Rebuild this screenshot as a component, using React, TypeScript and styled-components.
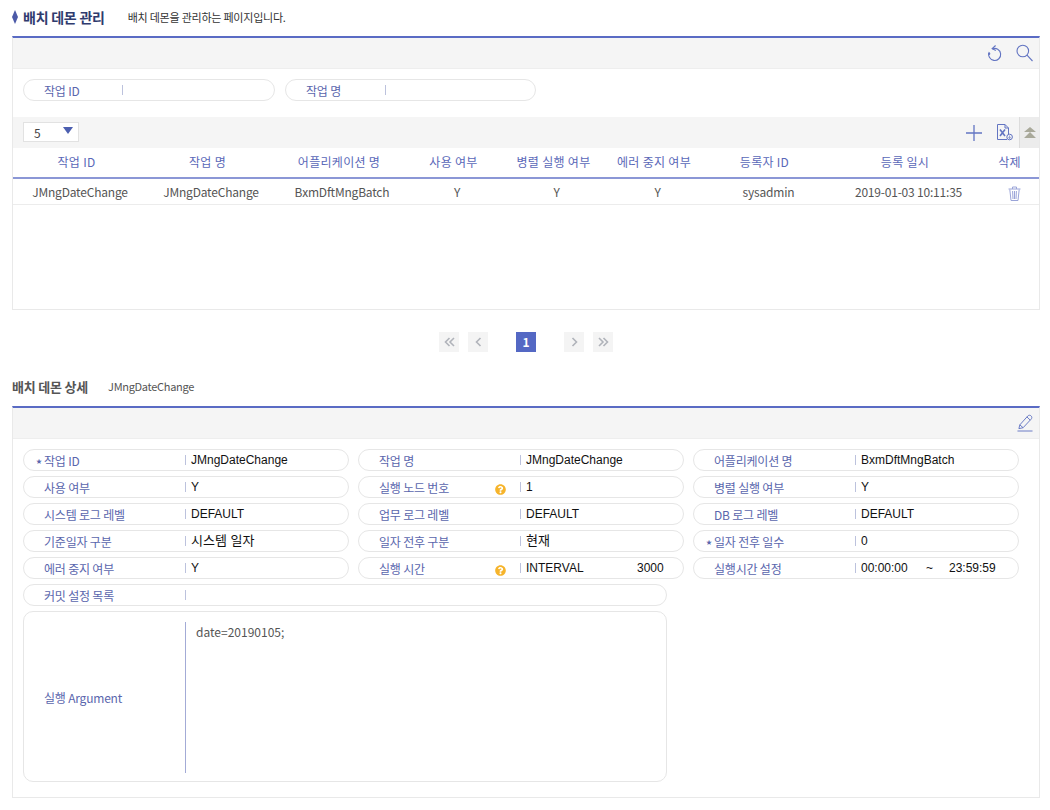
import React, { FC, ReactNode } from 'react'
import styled, { createGlobalStyle } from 'styled-components'
import { FaQuestionCircle } from 'react-icons/fa'

const GlobalStyle = createGlobalStyle`
  html, body {
    margin: 0;
    padding: 0;
    background: #fff;
    font-family: "Noto Sans CJK KR", "Noto Sans", sans-serif;
    font-size: 12px;
    color: #555;
  }
`

const Page = styled.div`
  width: 1028px;
  margin-left: 12px;
`

const TitleRow = styled.div`
  height: 36px;
  display: flex;
  align-items: center;
  padding-bottom: 2px;
  box-sizing: border-box;
`

const Diamond = styled.span`
  width: 6px;
  height: 14px;
  background: #4c5aa8;
  clip-path: polygon(50% 0, 100% 50%, 50% 100%, 0 50%);
  margin-right: 5px;
`

const PageTitle = styled.h1`
  margin: 0 23px 0 0;
  font-size: 14px;
  line-height: 20px;
  font-weight: 700;
  color: #2f3b6e;
  letter-spacing: -0.25px;
`

const PageDesc = styled.span`
  font-size: 11px;
  color: #333;
  letter-spacing: -0.22px;
`

const Panel = styled.section<{ $height: number }>`
  height: ${p => p.$height}px;
  box-sizing: border-box;
  border: 1px solid #e9e9e9;
  border-top: 2px solid #5a6bc4;
`

const Toolbar = styled.div`
  height: 30px;
  background: #f5f5f5;
  border-bottom: 1px solid #eeeeee;
  display: flex;
  align-items: center;
  justify-content: flex-end;
  gap: 13px;
  padding-right: 6px;
`

const IconButton = styled.button`
  padding: 0;
  border: 0;
  background: none;
  display: flex;
  line-height: 0;
`

const SearchArea = styled.div`
  height: 48px;
  box-sizing: border-box;
  display: flex;
  align-items: center;
  gap: 10px;
  padding: 0 0 6px 10px;
`

const Pill = styled.div<{ $width: number }>`
  width: ${p => p.$width}px;
  height: 22px;
  box-sizing: border-box;
  border: 1px solid #e6e6e6;
  border-radius: 11px;
  display: flex;
  align-items: center;
  background: #fff;
`

const PillLabel = styled.label<{ $width: number }>`
  width: ${p => p.$width}px;
  flex-shrink: 0;
  box-sizing: border-box;
  padding: 0 12px 0 20px;
  display: flex;
  align-items: center;
  justify-content: space-between;
  color: #5a66ad;
  font-size: 12px;
  letter-spacing: -0.2px;
`

const LabelText = styled.span`
  display: flex;
  align-items: center;
`

const Star = styled.span`
  width: 8px;
  margin-left: -8px;
  font-size: 6px;
  color: #5a66ad;
`

const Divider = styled.span`
  width: 1px;
  height: 10px;
  background: #bcc2dd;
  flex-shrink: 0;
`

const Value = styled.span<{ $hangul?: boolean }>`
  margin: ${p => (p.$hangul ? '-3px 0 0 5px' : '0 0 0 5px')};
  font-family: "Liberation Sans", "Noto Sans CJK KR", sans-serif;
  font-size: ${p => (p.$hangul ? 13 : 12)}px;
  color: #111;
  white-space: pre;
`

const GridBar = styled.div`
  height: 31px;
  box-sizing: border-box;
  background: #f5f5f5;
  display: flex;
  align-items: center;
  padding-left: 10px;
`

const SelectBox = styled.div`
  width: 56px;
  height: 20px;
  margin-bottom: 1px;
  box-sizing: border-box;
  border: 1px solid #e2e2e2;
  background: #fff;
  display: flex;
  align-items: center;
  justify-content: space-between;
  padding: 0 5px 0 10px;
  font-size: 12px;
  color: #444;
`

const SelectArrow = styled.span`
  width: 0;
  height: 0;
  border-left: 5px solid transparent;
  border-right: 5px solid transparent;
  border-top: 7px solid #4c5fb0;
  margin-bottom: 3px;
`

const GridActions = styled.div`
  margin-left: auto;
  display: flex;
  align-items: center;
  gap: 6px;
  height: 100%;
`

const IconGroup = styled.div`
  display: flex;
  align-items: center;
  gap: 15px;
`

const CollapseButton = styled.button`
  width: 20px;
  height: 100%;
  padding: 0;
  border: 0;
  border-left: 1px solid #dcdcdc;
  background: #ececec;
  display: flex;
  align-items: center;
  justify-content: center;
`

const Table = styled.table`
  width: 100%;
  border-collapse: collapse;
  table-layout: fixed;
`

const HeadCell = styled.th<{ $nudge: number }>`
  height: 27px;
  padding: 0 ${p => p.$nudge}px 2px 0;
  font-weight: 400;
  font-size: 12px;
  letter-spacing: 0.3px;
  color: #5a68b8;
  border-bottom: 2px solid #8b97d6;
  text-align: center;
`

const BodyCell = styled.td<{ $offset: number }>`
  height: 25px;
  padding: 0 ${p => Math.max(-p.$offset, 0)}px 0 ${p => Math.max(p.$offset, 0)}px;
  color: #555;
  font-size: 12px;
  letter-spacing: -0.2px;
  text-align: center;
  border-bottom: 1px solid #ececec;
`

const TrashSlot = styled.span`
  display: inline-flex;
  margin-left: 6px;
  vertical-align: middle;
`

const Pagination = styled.nav`
  height: 63px;
  display: flex;
  align-items: center;
  justify-content: center;
`

const PageButton = styled.span<{ $active?: boolean; $gapRight?: number }>`
  width: 20px;
  height: 20px;
  margin-right: ${p => p.$gapRight ?? 0}px;
  background: ${p => (p.$active ? '#5468c4' : '#f4f4f4')};
  color: #fff;
  font-weight: 700;
  font-size: 12px;
  display: flex;
  align-items: center;
  justify-content: center;
`

const SectionTitleRow = styled.div`
  height: 33px;
  display: flex;
  align-items: center;
  padding-bottom: 7px;
  box-sizing: border-box;
`

const SectionTitle = styled.h2`
  margin: 0 20px 0 0;
  font-size: 13px;
  font-weight: 700;
  color: #555;
  letter-spacing: -0.2px;
`

const SectionSub = styled.span`
  font-size: 11px;
  color: #555;
  letter-spacing: -0.3px;
`

const DetailBody = styled.div`
  display: grid;
  grid-template-columns: repeat(3, 326px);
  column-gap: 9px;
  row-gap: 5px;
  padding: 10px 0 0 10px;
`

const WideCell = styled.div`
  grid-column: span 2;
`

const ArgumentBox = styled.div`
  width: 644px;
  height: 171px;
  box-sizing: border-box;
  border: 1px solid #e6e6e6;
  border-radius: 10px;
  display: flex;
  align-items: center;
  padding: 10px 0 8px;
`

const ArgumentRule = styled.span`
  width: 1px;
  height: 100%;
  background: #a3abd6;
  flex-shrink: 0;
`

const ArgumentText = styled.div`
  align-self: flex-start;
  margin-left: 10px;
  color: #555;
  font-size: 12px;
  line-height: 18px;
  margin-top: 1px;
`

const Inline = styled.span<{ $width: number }>`
  display: inline-block;
  width: ${p => p.$width}px;
`

const Help = styled(FaQuestionCircle)`
  color: #f6b42b;
  font-size: 11px;
  margin: 4px 2px 0 0;
`

const stroke = '#6274c2'

const ReloadIcon = () => (
  <svg width="16" height="18" viewBox="0 0 16 18" fill="none" stroke={stroke} strokeWidth="1.1">
    <path d="M5.4 4.9 A6 6 0 1 1 2.2 8" />
    <path d="M8.6 1.5 L5.2 4.7 L8.8 6.4" />
    <circle cx="2.2" cy="9.8" r="0.6" fill={stroke} />
  </svg>
)

const SearchIcon = () => (
  <svg width="17" height="18" viewBox="0 0 17 18" fill="none" stroke={stroke} strokeWidth="1.1">
    <circle cx="6.8" cy="7" r="5.8" />
    <path d="M11 11.2 L16.5 17" />
  </svg>
)

const PlusIcon = () => (
  <svg width="16" height="16" viewBox="0 0 16 16" fill="none" stroke={stroke} strokeWidth="1.3">
    <path d="M8 0 V16 M0 8 H16" />
  </svg>
)

const ExcelIcon = () => (
  <svg width="16" height="17" viewBox="0 0 16 17" fill="none" stroke={stroke} strokeWidth="1">
    <path d="M10 15.5 H0.5 V0.5 H8 L11.5 4 V10 M8 0.5 V4 H11.5" />
    <path d="M3 5.5 L8 12 M8 5.5 L3 12" strokeWidth="1.6" />
    <circle cx="12.6" cy="13" r="2.8" />
    <path d="M12.6 11.5 V14.5 M11.4 13.4 L12.6 14.5 L13.8 13.4" strokeWidth="0.7" />
  </svg>
)

const CollapseIcon = () => (
  <svg width="12" height="11" viewBox="0 0 12 11" fill="#a9a99a">
    <path d="M6 0 L12 5 H0 Z M6 5 L12 11 H0 Z" />
  </svg>
)

const TrashIcon = () => (
  <svg width="13" height="15" viewBox="0 0 13 15" fill="none" stroke="#9aa4d8" strokeWidth="1">
    <path d="M0.5 3 H12.5 M4.5 3 V1 H8.5 V3" />
    <path d="M1.8 3.5 L3 14.5 H10 L11.2 3.5" />
    <path d="M4.6 5 L5 13 M6.5 5 V13 M8.4 5 L8 13" />
  </svg>
)

const PencilIcon = () => (
  <svg width="16" height="18" viewBox="0 0 17 19" fill="none" stroke={stroke} strokeWidth="1">
    <path d="M3 11.5 L11.5 2 C12.5 1 14 1 15 2 C16 3 16 4.4 15 5.4 L6.5 14.5 L2 15.5 Z" />
    <path d="M10.5 3 L14 6.4 M3 11.5 L6.5 14.5" />
    <path d="M0.5 18 H16.5" />
  </svg>
)

const Chevrons: FC<{ dir: 'left' | 'right'; double?: boolean }> = ({ dir, double }) => (
  <svg width="11" height="10" viewBox="0 0 11 10" fill="none" stroke="#b0b3ba" strokeWidth="1.6">
    <g transform={dir === 'right' ? 'translate(11 0) scale(-1 1)' : undefined}>
      <path d={double ? 'M5.5 1 L1.5 5 L5.5 9 M10 1 L6 5 L10 9' : 'M7.5 1 L3.5 5 L7.5 9'} />
    </g>
  </svg>
)

type FieldProps = {
  label: string
  value?: ReactNode
  required?: boolean
  help?: boolean
  hangul?: boolean
  width?: number
}

const DetailField: FC<FieldProps> = ({ label, value, required, help, hangul, width = 326 }) => (
  <Pill $width={width}>
    <PillLabel $width={161}>
      <LabelText>
        {required && <Star>★</Star>}
        {label}
      </LabelText>
      {help && <Help />}
    </PillLabel>
    <Divider />
    <Value $hangul={hangul}>{value}</Value>
  </Pill>
)

const columns = [
  { title: '작업 ID', width: 131, nudge: 4, offset: 3, value: 'JMngDateChange' },
  { title: '작업 명', width: 131, nudge: 4, offset: 3, value: 'JMngDateChange' },
  { title: '어플리케이션 명', width: 136, nudge: 8, offset: -2, value: 'BxmDftMngBatch' },
  { title: '사용 여부', width: 87, nudge: 2, offset: 5, value: 'Y' },
  { title: '병렬 실행 여부', width: 112, nudge: 1, offset: 5, value: 'Y' },
  { title: '에러 중지 여부', width: 90, nudge: 2, offset: 5, value: 'Y' },
  { title: '등록자 ID', width: 132, nudge: 3, offset: 5, value: 'sysadmin' },
  { title: '등록 일시', width: 148, nudge: 2, offset: 5, value: '2019-01-03 10:11:35' },
  { title: '삭제', width: 59, nudge: 0, offset: 3, value: <TrashSlot><TrashIcon /></TrashSlot> },
]

const App: FC = () => (
  <Page>
    <GlobalStyle />
    <TitleRow>
      <Diamond />
      <PageTitle>배치 데몬 관리</PageTitle>
      <PageDesc>배치 데몬을 관리하는 페이지입니다.</PageDesc>
    </TitleRow>

    <Panel $height={274}>
      <Toolbar>
        <IconButton><ReloadIcon /></IconButton>
        <IconButton><SearchIcon /></IconButton>
      </Toolbar>
      <SearchArea>
        <Pill $width={252}>
          <PillLabel $width={98}>작업 ID</PillLabel>
          <Divider />
        </Pill>
        <Pill $width={251}>
          <PillLabel $width={99}>작업 명</PillLabel>
          <Divider />
        </Pill>
      </SearchArea>
      <GridBar>
        <SelectBox>
          5
          <SelectArrow />
        </SelectBox>
        <GridActions>
          <IconGroup>
            <IconButton><PlusIcon /></IconButton>
            <IconButton><ExcelIcon /></IconButton>
          </IconGroup>
          <CollapseButton><CollapseIcon /></CollapseButton>
        </GridActions>
      </GridBar>
      <Table>
        <colgroup>
          {columns.map(c => <col key={c.title} style={{ width: c.width }} />)}
        </colgroup>
        <thead>
          <tr>
            {columns.map(c => <HeadCell key={c.title} $nudge={c.nudge}>{c.title}</HeadCell>)}
          </tr>
        </thead>
        <tbody>
          <tr>
            {columns.map(c => <BodyCell key={c.title} $offset={c.offset}>{c.value}</BodyCell>)}
          </tr>
        </tbody>
      </Table>
    </Panel>

    <Pagination>
      <PageButton $gapRight={9}><Chevrons dir="left" double /></PageButton>
      <PageButton $gapRight={28}><Chevrons dir="left" /></PageButton>
      <PageButton $active $gapRight={28}>1</PageButton>
      <PageButton $gapRight={9}><Chevrons dir="right" /></PageButton>
      <PageButton><Chevrons dir="right" double /></PageButton>
    </Pagination>

    <SectionTitleRow>
      <SectionTitle>배치 데몬 상세</SectionTitle>
      <SectionSub>JMngDateChange</SectionSub>
    </SectionTitleRow>

    <Panel $height={392}>
      <Toolbar>
        <IconButton><PencilIcon /></IconButton>
      </Toolbar>
      <DetailBody>
        <DetailField required label="작업 ID" value="JMngDateChange" />
        <DetailField label="작업 명" value="JMngDateChange" />
        <DetailField label="어플리케이션 명" value="BxmDftMngBatch" />
        <DetailField label="사용 여부" value="Y" />
        <DetailField help label="실행 노드 번호" value="1" />
        <DetailField label="병렬 실행 여부" value="Y" />
        <DetailField label="시스템 로그 레벨" value="DEFAULT" />
        <DetailField label="업무 로그 레벨" value="DEFAULT" />
        <DetailField label="DB 로그 레벨" value="DEFAULT" />
        <DetailField hangul label="기준일자 구분" value="시스템 일자" />
        <DetailField hangul label="일자 전후 구분" value="현재" />
        <DetailField required label="일자 전후 일수" value="0" />
        <DetailField label="에러 중지 여부" value="Y" />
        <DetailField help label="실행 시간" value={<><Inline $width={111}>INTERVAL</Inline>3000</>} />
        <DetailField label="실행시간 설정" value={<><Inline $width={65}>00:00:00</Inline><Inline $width={23}>~</Inline>23:59:59</>} />
        <WideCell>
          <DetailField width={644} label="커밋 설정 목록" />
        </WideCell>
        <WideCell>
          <ArgumentBox>
            <PillLabel $width={161}>실행 Argument</PillLabel>
            <ArgumentRule />
            <ArgumentText>date=20190105;</ArgumentText>
          </ArgumentBox>
        </WideCell>
      </DetailBody>
    </Panel>
  </Page>
)

export default App
